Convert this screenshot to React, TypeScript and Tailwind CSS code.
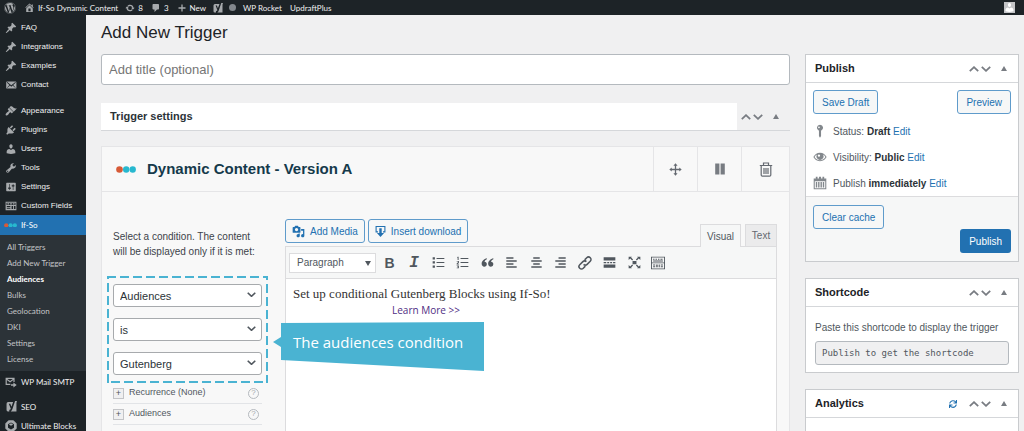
import type { ReactNode } from "react";
import { FaWordpress, FaSync } from "react-icons/fa";

const ICONS = {
  pin: "M10.44 3.02l1.82-1.82 6.36 6.35-1.83 1.82c-1.05-.68-2.48-.57-3.41.36l-.75.75c-.92.93-1.04 2.35-.35 3.41l-1.83 1.82-2.41-2.41-2.8 2.79c-.42.42-3.38 2.71-3.8 2.29s1.86-3.39 2.28-3.81l2.79-2.79L4.1 9.36l1.83-1.82c1.05.69 2.48.57 3.4-.36l.75-.75c.93-.92 1.05-2.35.36-3.41z",
  home: "M16 8.5l1.53 1.53-1.06 1.06L10 4.6l-6.47 6.49-1.06-1.06L10 2.5l4 4v-2h2v4zm-6-2.46l6 5.99V18H4v-5.97zM12 17v-5H8v5h4z",
  email: "M19 14.5v-9c0-.83-.67-1.5-1.5-1.5H3.49c-.83 0-1.5.67-1.5 1.5v9c0 .83.67 1.5 1.5 1.5H17.5c.83 0 1.5-.67 1.5-1.5zm-1.31-9.11c.33.33.15.67-.03.84L13.6 9.95l3.9 4.06c.12.14.2.36.06.51-.13.16-.43.15-.56.05l-4.37-3.73-2.14 1.95-2.13-1.95-4.37 3.73c-.13.1-.43.11-.56-.05-.14-.15-.06-.37.06-.51l3.9-4.06-4.06-3.72c-.18-.17-.36-.51-.03-.84s.67-.17.95.07l6.24 5.04 6.25-5.04c.28-.24.62-.4.95-.07z",
  appearance:
    "M14.48 11.06L7.41 3.99l1.5-1.5c.5-.56 2.3-.47 3.51.32 1.21.8 1.43 1.28 2.91 2.1 1.18.64 2.45 1.26 4.45.85zm-.71.71L6.7 4.7 4.93 6.47c-.39.39-.39 1.02 0 1.41l1.06 1.06c.39.39.39 1.03 0 1.42-.6.6-1.43 1.11-2.21 1.69-.35.26-.7.53-1.01.84C1.43 14.23.4 16.08 1.4 17.07c.99 1 2.84-.03 4.18-1.36.31-.31.58-.66.85-1.02.57-.78 1.08-1.61 1.69-2.21.39-.39 1.02-.39 1.41 0l1.06 1.06c.39.39 1.02.39 1.41 0z",
  plugins:
    "M13.11 4.36L9.87 7.6 8 5.73l3.24-3.24c.35-.34 1.05-.2 1.56.32.52.51.66 1.21.31 1.55zm-8 1.77l.91-1.12 9.01 9.01-1.19.84c-.71.71-2.63 1.16-3.82 1.16H6.14L4.9 17.26c-.59.59-1.54.59-2.12 0-.59-.58-.59-1.53 0-2.12l1.24-1.24v-3.88c0-1.13.4-3.19 1.09-3.89zm7.26 3.97l3.24-3.24c.34-.35 1.04-.21 1.55.31.52.51.66 1.21.31 1.55l-3.24 3.25z",
  users:
    "M10 9.25c-2.27 0-2.73-3.44-2.73-3.44C7 4.02 7.82 2 9.97 2c2.16 0 2.98 2.02 2.71 3.81 0 0-.41 3.44-2.68 3.44zm0 2.57L12.72 10c2.39 0 4.52 2.33 4.52 4.53v2.49s-3.65 1.13-7.24 1.13c-3.65 0-7.24-1.13-7.24-1.13v-2.49c0-2.25 1.94-4.48 4.47-4.48z",
  tools:
    "M16.68 9.77c-1.34 1.34-3.3 1.67-4.95.99l-5.41 6.52c-.99.99-2.59.99-3.58 0s-.99-2.59 0-3.57l6.52-5.42c-.68-1.65-.35-3.61.99-4.95 1.28-1.28 3.12-1.62 4.72-1.06l-2.89 2.89 2.82 2.82 2.86-2.87c.53 1.58.18 3.39-1.08 4.65zM3.81 16.21c.4.39 1.04.39 1.43 0 .4-.4.4-1.04 0-1.43-.39-.4-1.03-.4-1.43 0-.39.39-.39 1.03 0 1.43z",
  settings:
    "M18 16V4c0-.55-.45-1-1-1H3c-.55 0-1 .45-1 1v12c0 .55.45 1 1 1h14c.55 0 1-.45 1-1zM8 11h1c.55 0 1 .45 1 1s-.45 1-1 1H8v1.5c0 .28-.22.5-.5.5s-.5-.22-.5-.5V13H6c-.55 0-1-.45-1-1s.45-1 1-1h1V5.5c0-.28.22-.5.5-.5s.5.22.5.5V11zm5-2h-1c-.55 0-1-.45-1-1s.45-1 1-1h1V5.5c0-.28.22-.5.5-.5s.5.22.5.5V7h1c.55 0 1 .45 1 1s-.45 1-1 1h-1v5.5c0 .28-.22.5-.5.5s-.5-.22-.5-.5V9z",
  fields:
    "M19 17V3H1v14h18zM2.500 4.500h15v4h-15v-4zM4 5.500v2h3v-2H4zm4.500 0v2h3v-2h-3zm4.500 0v2h3v-2h-3zM3 10h6v1.500H3V10zm0 3h6v1.500H3V13zm8-3h2.500v5H11v-5zm4 0h2.500v5H15v-5z",
  mailSmtp:
    "M1 3h15v7h-2V6.500L8.500 11 3 6.500V13h6v2H1V3zm3 2l4.500 3.500L13 5H4zM14 11l5.500 4-5.500 4v-2.700h-4v-2.600h4V11z",
  update:
    "M10.2 3.28c3.53 0 6.43 2.61 6.92 6h2.08l-3.5 4-3.5-4h2.32c-.45-1.97-2.21-3.45-4.32-3.45-1.45 0-2.73.71-3.54 1.78L4.95 5.66C6.23 4.2 8.11 3.28 10.2 3.28zm-.4 13.44c-3.52 0-6.43-2.61-6.92-6H.8l3.5-4c1.17 1.33 2.33 2.67 3.5 4H5.48c.45 1.97 2.21 3.45 4.32 3.45 1.45 0 2.73-.71 3.54-1.78l1.71 1.95c-1.28 1.46-3.15 2.38-5.25 2.38z",
  comment: "M5 2h9c1.1 0 2 .9 2 2v7c0 1.1-.9 2-2 2h-2l-5 5v-5H5c-1.1 0-2-.9-2-2V4c0-1.1.9-2 2-2z",
  plus: "M8.700 3h2.600v5.700H17v2.600h-5.700V17H8.700v-5.700H3V8.700h5.700z",
  media:
    "M13 11V4c0-.55-.45-1-1-1h-1.67L9 1H5L3.67 3H2c-.55 0-1 .45-1 1v7c0 .55.45 1 1 1h10c.55 0 1-.45 1-1zM7 4.5c1.38 0 2.5 1.12 2.5 2.5S8.38 9.5 7 9.5 4.5 8.38 4.5 7 5.62 4.5 7 4.5zM14 6h5v10.5c0 1.38-1.12 2.5-2.5 2.5S14 17.88 14 16.5s1.12-2.5 2.5-2.5c.17 0 .34.02.5.05V9h-3V6zm-4 8.05V13h2v3.5c0 1.38-1.12 2.5-2.5 2.5S7 17.88 7 16.5 8.12 14 9.5 14c.17 0 .34.02.5.05z",
  download: "M1 0h18v12h-4.500V9.500H17V2H3v7.500h2.500V12H1V0zm6.800 4h4.400v8.500h4.300L10 20l-6.500-7.500h4.300V4z",
  status:
    "M10 1a4.500 4.500 0 0 1 1.500 8.700V17L10 19.500 8.500 17V9.700A4.500 4.500 0 0 1 10 1zM8.500 3.500a1.200 1.200 0 1 0 0 2.400 1.200 1.200 0 0 0 0-2.400z",
  eye: "M10 4c4.500 0 7.800 3 9.500 6-1.700 3-5 6-9.500 6S2.200 13 .5 10C2.200 7 5.500 4 10 4zm-4.300 2.500C4.200 7.400 3 8.700 2.200 10c1.500 2.500 4.300 4.500 7.800 4.500s6.300-2 7.800-4.500c-.8-1.300-2-2.600-3.500-3.500A5 5 0 1 1 5.700 6.500zM8.500 6.300a1.700 1.700 0 1 0 0 3.400 1.700 1.700 0 0 0 0-3.400z",
  calendar:
    "M4 1h2.500v2.500h2V1h3v2.500h2V1H16v2.500h3V19H1V3.500h3V1zM2.500 7.500v10h15v-10h-15zM4 8.500h2v8H4v-8zm3.300 0h2v8h-2v-8zm3.400 0h2v8h-2v-8zm3.300 0h2v8h-2v-8z",
  move: "M10 .5l3.200 3.700H11v4.800h4.800V6.800L19.500 10l-3.700 3.200V11H11v4.800h2.200L10 19.500l-3.200-3.700H9V11H4.200v2.200L.5 10l3.700-3.200V9H9V4.200H6.800z",
  pause: "M2 1h7v18H2zM11 1h7v18h-7z",
  bullets: "M1 2h3.500v3.500H1zM7 3h12v1.500H7zM1 8.200h3.500v3.500H1zM7 9.200h12v1.500H7zM1 14.500h3.500V18H1zM7 15.500h12V17H7z",
  numbers:
    "M2.500 1H4v5H2.500V2.500H1.500zM7 3h12v1.500H7zM1 7.500h3.500v3l-2 1.500h2v1H1v-1.500l2-1.800v-1.200H1zM7 9.200h12v1.500H7zM1 14.500h3.500V19H1v-1h2.200v-.8H1.500v-.9h1.700v-.8H1zM7 15.500h12V17H7z",
  quote:
    "M9 3.500C5 4.500 1 7.500 1 12c0 2.700 1.700 4.500 4.100 4.500a3.800 3.800 0 0 0 3.900-3.800c0-2.100-1.400-3.600-3.600-3.700C5.900 7.200 7 6 9 5V3.500zm10 0c-4 1-8 4-8 8.500 0 2.700 1.700 4.500 4.100 4.500a3.800 3.800 0 0 0 3.900-3.800c0-2.100-1.400-3.600-3.600-3.700.5-1.800 1.600-3 3.600-4V3.500z",
  left: "M2 2h11v2.200H2zM2 6.600h16v2.200H2zM2 11.200h11v2.200H2zM2 15.800h16V18H2z",
  center: "M5 2h10v2.200H5zM2 6.600h16v2.200H2zM5 11.200h10v2.200H5zM2 15.800h16V18H2z",
  right: "M7 2h11v2.200H7zM2 6.600h16v2.200H2zM7 11.200h11v2.200H7zM2 15.800h16V18H2z",
  more: "M1 2h18v5H1zM1 9.200h4v1.800H1zM6.500 9.200h3v1.800h-3zM11 9.200h3v1.800h-3zM15.500 9.200H19v1.800h-3.500zM1 13h18v5H1z",
  fullscreen:
    "M1 1h5L4.800 2.400l3 3-1.400 1.400-3-3L1 6V1zm13 0h5v5l-2.400-2.200-3 3-1.400-1.400 3-3L14 1zM7 7.500h6v5H7zM1 14l2.400 2.200 3-3 1.400 1.400-3 3L6 19H1v-5zm18 0v5h-5l1.200-1.400-3-3 1.400-1.400 3 3L19 14z",
  toolbar:
    "M0 1h20v18H0V1zm1.300 1.300v7h17.400v-7H1.300zM3 4h2v1.500H3zM6.500 4h2v1.500h-2zM10 4h2v1.500h-2zM13.500 4h3v1.500h-3zM3 6.500h14V8H3zM1.300 10.500v7.200h17.400v-7.200H1.300zM3 12h3v1.500H3zM7.500 12h2v4h-2zM11 12h1.500v4H11zM14 12h3v1.500h-3zM3 14.500h3V16H3zM14 14.500h3V16h-3z",
  // rounded tile with the Y mark knocked out of it
  seo: "M4 2h9l-3.200 8.500L7.800 5H5.200l3.500 9c-.5 1.400-1.200 2-2.700 2.100V19H3.500A2.500 2.500 0 0 1 1 16.500V5a3 3 0 0 1 3-3zM16.500 0H20l-1 3v16H8.500c1.500-.8 2.300-2.200 3-4L16.500 0z",
};

type IconName = keyof typeof ICONS;

function Icon({ name, className = "size-3" }: { name: IconName; className?: string }) {
  return (
    <svg viewBox="0 0 20 20" fill="currentColor" fillRule="evenodd" aria-hidden className={`shrink-0 ${className}`}>
      <path d={ICONS[name]} />
    </svg>
  );
}

function Dots({ className }: { className: string }) {
  return (
    <svg viewBox="0 0 20 7" aria-hidden className={`shrink-0 ${className}`}>
      <circle cx="3.5" cy="3.5" r="3.3" fill="#d75a37" />
      <circle cx="10.200" cy="3.5" r="3.2" fill="#27b8cf" />
      <circle cx="16.700" cy="3.5" r="3.2" fill="#27b8cf" />
    </svg>
  );
}

function Chevron({ className }: { className: string }) {
  return (
    <svg viewBox="0 0 10 6" fill="none" stroke="currentColor" strokeWidth="1.8" aria-hidden className={className}>
      <path d="M.8 .8L5 4.800 9.200.8" />
    </svg>
  );
}

interface MenuEntry {
  label: string;
  icon: ReactNode;
  modern?: boolean;
}

const CONTENT_MENU: MenuEntry[] = [
  { label: "FAQ", icon: <Icon name="pin" /> },
  { label: "Integrations", icon: <Icon name="pin" /> },
  { label: "Examples", icon: <Icon name="pin" /> },
  { label: "Contact", icon: <Icon name="email" /> },
];

const ADMIN_MENU: MenuEntry[] = [
  { label: "Appearance", icon: <Icon name="appearance" /> },
  { label: "Plugins", icon: <Icon name="plugins" /> },
  { label: "Users", icon: <Icon name="users" /> },
  { label: "Tools", icon: <Icon name="tools" /> },
  { label: "Settings", icon: <Icon name="settings" /> },
  { label: "Custom Fields", icon: <Icon name="fields" /> },
];

const PLUGIN_MENU: MenuEntry[] = [
  { label: "SEO", icon: <Icon name="seo" className="size-[11px]" />, modern: true },
  {
    label: "Ultimate Blocks",
    modern: true,
    icon: (
      <svg viewBox="0 0 20 20" aria-hidden className="size-3">
        <path d="M6 .5h8L19.500 6v8L14 19.500H6L.5 14V6z" fill="#a7aaad" />
        <path d="M10 4l5 3v6l-5 3-5-3V7z" fill="#1d2327" />
        <path d="M10 5.500L13.500 7.600 10 9.700 6.500 7.600z" fill="#a7aaad" />
      </svg>
    ),
  },
];

const SUBMENU = ["All Triggers", "Add New Trigger", "Audiences", "Bulks", "Geolocation", "DKI", "Settings", "License"];

const CONDITIONS = [
  { label: "Condition", value: "Audiences" },
  { label: "Operator", value: "is" },
  { label: "Audience", value: "Gutenberg" },
];

const TOOLBAR: { label: string; icon: ReactNode }[] = [
  { label: "Bold", icon: <span className="text-sm font-bold">B</span> },
  { label: "Italic", icon: <span className="font-['Liberation_Mono',monospace] text-base font-bold italic">I</span> },
  { label: "Bulleted list", icon: <Icon name="bullets" className="size-[13px]" /> },
  { label: "Numbered list", icon: <Icon name="numbers" className="size-[13px]" /> },
  { label: "Blockquote", icon: <Icon name="quote" className="size-[13px]" /> },
  { label: "Align left", icon: <Icon name="left" className="size-[13px]" /> },
  { label: "Align center", icon: <Icon name="center" className="size-[13px]" /> },
  { label: "Align right", icon: <Icon name="right" className="size-[13px]" /> },
  {
    label: "Insert link",
    icon: (
      <svg viewBox="0 0 20 20" fill="none" stroke="currentColor" strokeWidth="2.2" aria-hidden className="size-[14px]">
        <path d="M8 12a3.500 3.500 0 0 0 5 0l4.500-4.500a3.500 3.500 0 0 0-5-5L9.500 5.500M12 8a3.500 3.500 0 0 0-5 0l-4.500 4.500a3.500 3.500 0 0 0 5 5l3-3" />
      </svg>
    ),
  },
  { label: "Read more tag", icon: <Icon name="more" className="size-[13px]" /> },
  { label: "Fullscreen", icon: <Icon name="fullscreen" className="size-[13px]" /> },
  { label: "Toolbar toggle", icon: <Icon name="toolbar" className="size-[14px]" /> },
];

function AdminBar() {
  return (
    <header className="flex h-[15px] shrink-0 items-center bg-[#1d2327] pr-[9px] pl-1 font-[Lato,sans-serif] text-[8px] leading-none text-[#f0f0f1]">
      <a href="#wp" aria-label="About WordPress" className="mr-2 text-[#a7aaad]">
        <FaWordpress className="size-3" />
      </a>
      <a href="#site" className="mr-[7px] flex items-center gap-[3px]">
        <Icon name="home" className="size-[11px] text-[#a7aaad]" />
        If-So Dynamic Content
      </a>
      <a href="#updates" className="mr-2 flex items-center gap-[3px]">
        <Icon name="update" className="size-[10px] text-[#a7aaad]" />8
      </a>
      <a href="#comments" className="mr-2 flex items-center gap-[3px]">
        <Icon name="comment" className="size-[10px] text-[#a7aaad]" />3
      </a>
      <a href="#new" className="mr-[7px] flex items-center gap-[3px]">
        <Icon name="plus" className="size-[10px] text-[#a7aaad]" />
        New
      </a>
      <a href="#seo" aria-label="SEO" className="mr-[7px] flex items-center gap-[6px] text-[#a7aaad]">
        <Icon name="seo" className="size-[10px]" />
        <span className="size-[7px] rounded-full bg-[#82878c]" />
      </a>
      <a href="#rocket" className="mr-2">
        WP Rocket
      </a>
      <a href="#updraft">UpdraftPlus</a>
      <a href="#profile" aria-label="Profile" className="ml-auto block size-[11px] bg-[#c3c4c7] text-white">
        <Icon name="users" className="size-[11px]" />
      </a>
    </header>
  );
}

function MenuItem({ label, icon, modern }: MenuEntry) {
  return (
    <li>
      <a href="#menu" className="flex h-[19px] items-center gap-1 pl-[5px] whitespace-nowrap text-[#f0f0f1]">
        <span className="flex w-3 shrink-0 justify-center text-[#a7aaad]">{icon}</span>
        <span className={modern ? "font-[Lato,sans-serif]" : undefined}>{label}</span>
      </a>
    </li>
  );
}

function Sidebar() {
  return (
    <nav aria-label="Main menu" className="w-[86px] shrink-0 overflow-hidden bg-[#1d2327] pt-[3px] text-[8px] leading-none">
      <ul>
        {CONTENT_MENU.map((item) => (
          <MenuItem key={item.label} {...item} />
        ))}
      </ul>
      <ul className="mt-[7px]">
        {ADMIN_MENU.map((item) => (
          <MenuItem key={item.label} {...item} />
        ))}
      </ul>
      <a href="#if-so" className="flex h-5 items-center gap-1 bg-[#2271b1] pl-1 font-[Lato,sans-serif] text-white">
        <Dots className="w-[13px]" />
        If-So
      </a>
      <ul className="bg-[#2c3338] py-1 font-[Lato,sans-serif]">
        {SUBMENU.map((label) => (
          <li key={label}>
            <a
              href="#submenu"
              className={
                label === "Audiences"
                  ? "flex h-4 items-center pl-[7px] font-bold text-white"
                  : "flex h-4 items-center pl-[7px] text-[#c3c4c7]"
              }
            >
              {label}
            </a>
          </li>
        ))}
      </ul>
      <ul className="mt-px">
        <MenuItem label="WP Mail SMTP" icon={<Icon name="mailSmtp" />} modern />
      </ul>
      <ul className="mt-[6px]">
        {PLUGIN_MENU.map((item) => (
          <MenuItem key={item.label} {...item} />
        ))}
      </ul>
    </nav>
  );
}

function BoxControls() {
  return (
    <div className="flex w-[53px] shrink-0 items-center self-stretch pl-1 text-[#787c82]">
      <button type="button" aria-label="Move up" className="mr-[2px]">
        <Chevron className="w-[10px] rotate-180" />
      </button>
      <button type="button" aria-label="Move down">
        <Chevron className="w-[10px]" />
      </button>
      <button type="button" aria-label="Toggle panel" className="ml-[10px]">
        <svg viewBox="0 0 6 5" fill="currentColor" aria-hidden className="w-[6px]">
          <path d="M3 0l3 5H0z" />
        </svg>
      </button>
    </div>
  );
}

function SideBox({ title, action, children }: { title: string; action?: ReactNode; children?: ReactNode }) {
  return (
    <section className="border border-[#c9cbce] bg-white">
      <div className="flex h-[28px] items-center border-b border-[#d5d7da] pl-[9px]">
        <h2 className="flex-1 text-[11px] font-bold text-[#1d2327]">{title}</h2>
        {action}
        <BoxControls />
      </div>
      {children}
    </section>
  );
}

const OUTLINE_BUTTON =
  "flex h-6 items-center justify-center rounded-[3px] border border-[#5f9bcb] bg-[#f6f7f7] text-[10px] whitespace-nowrap text-[#2271b1]";

function StatusRow({ icon, label, value }: { icon: IconName; label: string; value: string }) {
  return (
    <li className="flex h-[26px] items-center gap-[6px]">
      <Icon name={icon} className="size-[14px] text-[#82878c]" />
      <span>
        {label} <b className="text-[#2c3338]">{value}</b>{" "}
        <a href="#edit" className="text-[#2271b1]">
          Edit
        </a>
      </span>
    </li>
  );
}

function PublishBox() {
  return (
    <SideBox title="Publish">
      <div className="flex justify-between px-[7px] pt-[7px]">
        <button type="button" className={`${OUTLINE_BUTTON} px-2`}>
          Save Draft
        </button>
        <button type="button" className={`${OUTLINE_BUTTON} px-2`}>
          Preview
        </button>
      </div>
      <ul className="px-[7px] pt-1 text-[10px] text-[#50575e]">
        <StatusRow icon="status" label="Status:" value="Draft" />
        <StatusRow icon="eye" label="Visibility:" value="Public" />
        <StatusRow icon="calendar" label="Publish" value="immediately" />
      </ul>
      <div className="flex flex-col border-t border-[#dcdcde] bg-[#f6f7f7] px-[7px] py-2">
        <button type="button" className={`${OUTLINE_BUTTON} self-start px-2`}>
          Clear cache
        </button>
        <button type="button" className="h-6 self-end rounded-[3px] bg-[#2271b1] px-[9px] text-[10px] text-white">
          Publish
        </button>
      </div>
    </SideBox>
  );
}

function ConditionPanel() {
  return (
    <div className="w-[149px] shrink-0 pt-[37px]">
      <p className="text-[10px] leading-[15px] whitespace-nowrap text-[#3c434a]">
        Select a condition. The content
        <br />
        will be displayed only if it is met:
      </p>
      <div className="relative -mx-[6px] mt-[17px] px-[6px] py-2">
        <svg aria-hidden className="pointer-events-none absolute inset-0 size-full">
          <rect x="0" y="0" width="100%" height="100%" fill="none" stroke="#4ab3d2" strokeWidth="4" strokeDasharray="9 4" />
        </svg>
        <div className="flex flex-col gap-[11px]">
          {CONDITIONS.map(({ label, value }) => (
            <div key={label} className="relative">
              <select
                aria-label={label}
                className="block h-[23px] w-full appearance-none rounded-[3px] border border-[#a7aaad] bg-white px-[6px] text-[11px] leading-4 text-[#2c3338]"
              >
                <option>{value}</option>
              </select>
              <Chevron className="pointer-events-none absolute top-2 right-[6px] w-[9px] text-[#50575e]" />
            </div>
          ))}
        </div>
      </div>
      <ul className="text-[9px] text-[#50575e]">
        {["Recurrence (None)", "Audiences"].map((label) => (
          <li key={label} className="flex h-[21px] items-center border-b border-[#e2e4e7]">
            <button
              type="button"
              aria-label={`Expand ${label}`}
              className="mr-[5px] flex size-[11px] items-center justify-center border border-[#c3c4c7] bg-[#f0f0f1] leading-none"
            >
              +
            </button>
            {label}
            <button
              type="button"
              aria-label="Help"
              className="mr-[3px] ml-auto flex size-[11px] items-center justify-center rounded-full border border-[#b4b9be] text-[8px] leading-none text-[#a7aaad]"
            >
              ?
            </button>
          </li>
        ))}
      </ul>
    </div>
  );
}

function Callout() {
  return (
    <div className="absolute top-[43px] -left-[13px] h-[49px] w-[212px] pt-[9px] pl-[20px]">
      <svg viewBox="0 0 212 49" preserveAspectRatio="none" aria-hidden className="absolute inset-0 size-full">
        <path d="M8 1L211 0 211 49 8 38V25L0 20 8 15z" fill="#4ab3d2" />
      </svg>
      <p className="relative font-['Open_Sans',sans-serif] text-[15px] leading-[22px] whitespace-nowrap text-white">
        The audiences condition
      </p>
    </div>
  );
}

function Editor() {
  return (
    <div className="flex min-w-0 flex-1 flex-col pt-[27px]">
      <div className="flex items-start gap-[3px]">
        <button type="button" className={`${OUTLINE_BUTTON} gap-[5px] px-[6px]`}>
          <Icon name="media" className="size-[13px]" />
          Add Media
        </button>
        <button type="button" className={`${OUTLINE_BUTTON} gap-[5px] px-[6px]`}>
          <Icon name="download" className="size-[11px]" />
          Insert download
        </button>
        <div className="relative z-10 mt-[5px] -mb-px ml-auto flex gap-1 text-[10px] text-[#50575e]">
          <button type="button" className="h-[23px] w-[41px] border border-b-0 border-[#dcdcde] bg-[#f6f7f7]">
            Visual
          </button>
          <button type="button" className="h-[22px] w-8 border border-b-0 border-[#dcdcde] bg-[#ebebec] text-[#646970]">
            Text
          </button>
        </div>
      </div>
      <div className="flex flex-1 flex-col border border-b-0 border-[#dcdcde]">
        <div className="flex h-8 items-center border-b border-[#dcdcde] bg-[#f6f7f7] pl-[3px] text-[#50575e]">
          <div className="relative mr-[2px]">
            <select
              aria-label="Block format"
              className="block h-5 w-[87px] appearance-none border border-[#dcdcde] bg-white px-[7px] text-[10px] leading-4"
            >
              <option>Paragraph</option>
            </select>
            <svg viewBox="0 0 6 5" fill="currentColor" aria-hidden className="pointer-events-none absolute top-2 right-[5px] w-[6px]">
              <path d="M0 0h6L3 5z" />
            </svg>
          </div>
          <div className="flex w-[292px] items-center justify-between">
            {TOOLBAR.map(({ label, icon }) => (
              <button key={label} type="button" aria-label={label} className="flex size-[23px] items-center justify-center leading-none">
                {icon}
              </button>
            ))}
          </div>
        </div>
        <div className="relative flex-1 bg-white px-[7px] pt-[6px]">
          <p className="font-['Liberation_Serif',serif] text-[13px] leading-[18px] text-[#333]">
            Set up conditional Gutenberg Blocks using If-So!
          </p>
          <a
            href="#learn-more"
            className="ml-[99px] block w-fit font-['Open_Sans',sans-serif] text-[10px] leading-[15px] text-[#4f2d84]"
          >
            Learn More &gt;&gt;
          </a>
          <Callout />
        </div>
      </div>
    </div>
  );
}

function VersionCard() {
  return (
    <section className="flex flex-1 flex-col border border-b-0 border-[#e5e5e7] bg-[#f8f8f8]">
      <div className="flex h-[45px] shrink-0 items-stretch border-b border-[#e5e5e7] pl-[14px]">
        <h2 className="flex flex-1 items-center gap-[11px] text-[15px] font-bold text-[#153a4b]">
          <Dots className="w-5" />
          Dynamic Content - Version A
        </h2>
        <button type="button" aria-label="Move version" className="flex w-11 items-center justify-center border-l border-[#e5e5e7] text-[#646970]">
          <Icon name="move" className="size-[13px]" />
        </button>
        <button type="button" aria-label="Pause version" className="flex w-11 items-center justify-center border-l border-[#e5e5e7] text-[#787c82]">
          <Icon name="pause" className="size-3" />
        </button>
        <button type="button" aria-label="Delete version" className="flex w-12 items-center justify-center border-l border-[#e5e5e7] text-[#646970]">
          <svg viewBox="0 0 14 15" fill="none" stroke="currentColor" strokeWidth="1.2" aria-hidden className="w-[14px]">
            <path d="M.8 3.500h12.400M4.500 3.300V1h5v2.300M2.200 3.800v9.200q0 1.200 1.200 1.200h7.200q1.200 0 1.200-1.200V3.800M5 6v6M7 6v6M9 6v6" />
          </svg>
        </button>
      </div>
      <div className="flex flex-1 gap-[23px] pr-3 pl-[11px]">
        <ConditionPanel />
        <Editor />
      </div>
    </section>
  );
}

export default function App() {
  return (
    <div className="flex h-screen flex-col overflow-hidden bg-[#f0f0f1] font-['Liberation_Sans',Arial,sans-serif]">
      <AdminBar />
      <div className="flex min-h-0 flex-1">
        <Sidebar />
        <main className="flex min-w-0 flex-1 flex-col pr-[5px] pl-[15px]">
          <h1 className="pt-[6px] pb-[9px] text-[17px] leading-6 text-[#1d2327]">Add New Trigger</h1>
          <div className="flex min-h-0 flex-1 gap-[15px]">
            <div className="flex min-w-0 flex-1 flex-col">
              <input
                type="text"
                aria-label="Title"
                placeholder="Add title (optional)"
                className="h-[31px] shrink-0 rounded-[3px] border border-[#b4b9be] bg-white px-[7px] text-[13px] placeholder:text-[#757575]"
              />
              <section className="mt-[18px] mb-[15px] flex h-[28px] shrink-0 border-b border-[#d5d7da]">
                <h2 className="flex flex-1 items-center bg-white pl-[9px] text-[11px] font-bold text-[#2c3338]">
                  Trigger settings
                </h2>
                <BoxControls />
              </section>
              <VersionCard />
            </div>
            <aside className="flex w-[214px] shrink-0 flex-col gap-4">
              <PublishBox />
              <SideBox title="Shortcode">
                <label className="block px-[9px] pt-[13px] pb-[7px] text-[10px] leading-4 text-[#50575e]">
                  <span className="block whitespace-nowrap">Paste this shortcode to display the trigger</span>
                  <input
                    type="text"
                    readOnly
                    value="Publish to get the shortcode"
                    className="mt-[5px] block h-6 w-full rounded-[3px] border border-[#b4b9be] bg-[#f0f0f1] px-[6px] font-['DejaVu_Sans_Mono',monospace] text-[9px] text-[#50575e]"
                  />
                </label>
              </SideBox>
              <SideBox
                title="Analytics"
                action={
                  <button type="button" aria-label="Refresh analytics" className="mr-2 text-[#2271b1]">
                    <FaSync className="size-2" />
                  </button>
                }
              >
                <div className="h-24" />
              </SideBox>
            </aside>
          </div>
        </main>
      </div>
    </div>
  );
}
